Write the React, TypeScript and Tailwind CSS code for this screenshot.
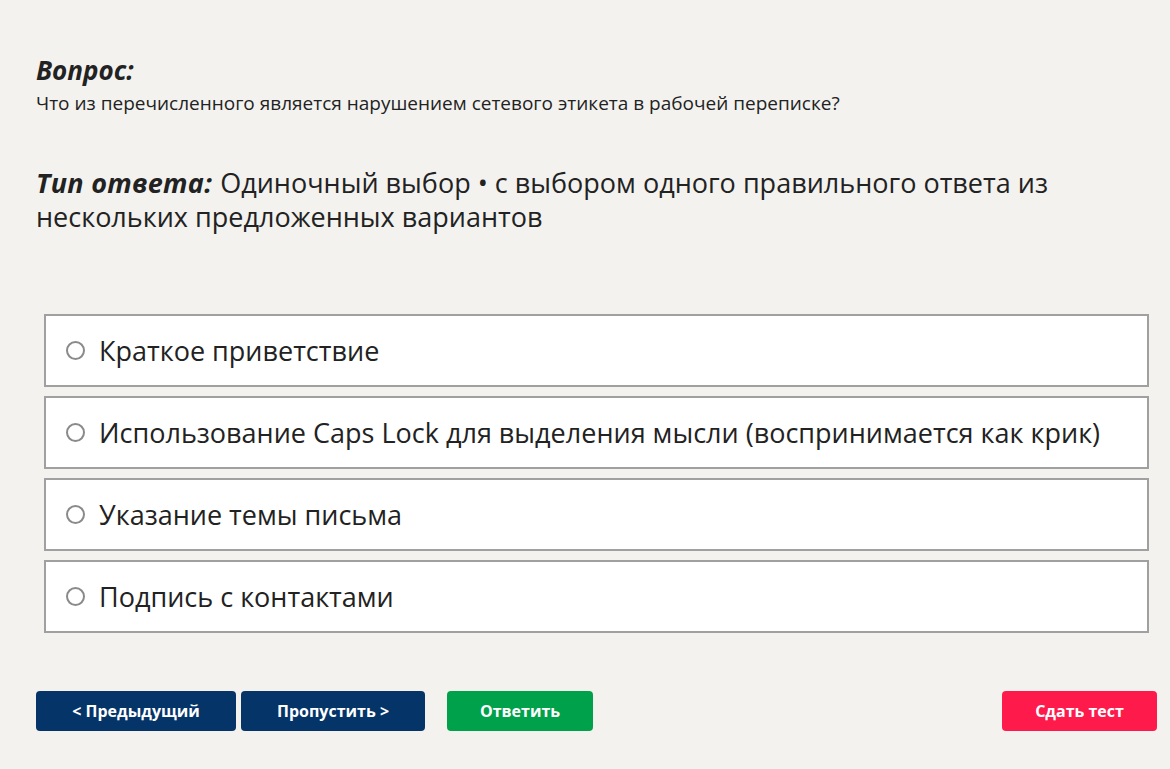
const options = [
  "Краткое приветствие",
  "Использование Caps Lock для выделения мысли (воспринимается как крик)",
  "Указание темы письма",
  "Подпись с контактами",
];

export default function App() {
  return (
    <div
      className="min-h-[769px] w-full bg-[#f3f2ef] text-[#222] pl-[36px] pr-[13px] pt-[52px]"
      style={{ fontFamily: '"Open Sans", "Noto Sans", sans-serif' }}
    >
      <div className="text-[26px] leading-[36px] font-bold italic text-[#222]">Вопрос:</div>
      <div className="mt-[2px] text-[19px] leading-[26px] text-[#222]">
        Что из перечисленного является нарушением сетевого этикета в рабочей переписке?
      </div>

      <div className="mt-[50px] text-[27px] leading-[34px] max-w-[1060px]">
        <span className="inline-block font-bold italic tracking-[0.3px] pr-[4px]">Тип&nbsp;ответа:</span>
        <span className="pl-[4px]">Одиночный выбор • с выбором одного правильного ответа из нескольких предложенных вариантов</span>
      </div>

      <div className="mt-[80px] mx-[8px] flex flex-col gap-[9px]">
        {options.map((o) => (
          <label
            key={o}
            className="flex items-center h-[73px] bg-white border-2 border-[#a0a0a0] pl-[20px] cursor-pointer"
          >
            <span className="w-[19px] h-[19px] rounded-full border-2 border-[#8a8a8a] bg-white shrink-0" />
            <span className="ml-[14px] text-[27px] leading-[34px] text-[#222]">{o}</span>
          </label>
        ))}
      </div>

      <div className="mt-[58px] flex items-center">
        <button className="h-[40px] w-[200px] rounded-[4px] bg-[#043468] text-white text-[16px] font-bold">
          &lt; Предыдущий
        </button>
        <button className="ml-[5px] h-[40px] w-[184px] rounded-[4px] bg-[#043468] text-white text-[16px] font-bold">
          Пропустить &gt;
        </button>
        <button className="ml-[22px] h-[40px] w-[146px] rounded-[4px] bg-[#00a14b] text-white text-[16px] font-bold">
          Ответить
        </button>
        <button className="ml-auto h-[40px] w-[155px] rounded-[4px] bg-[#ff1a4c] text-white text-[16px] font-bold">
          Сдать тест
        </button>
      </div>
    </div>
  );
}
